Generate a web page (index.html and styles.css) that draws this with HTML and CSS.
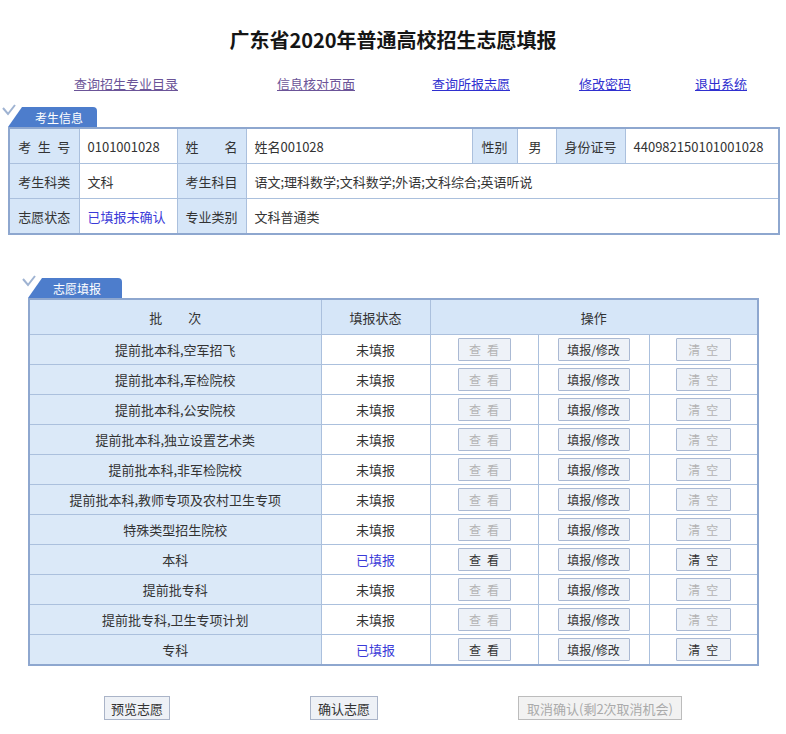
FILE: index.html
```html
<!DOCTYPE html>
<html lang="zh-CN">
<head>
<meta charset="utf-8">
<title>广东省2020年普通高校招生志愿填报</title>
<link rel="stylesheet" href="styles.css">
</head>
<body>
<h1 class="title">广东省2020年普通高校招生志愿填报</h1>
<nav class="nav">
  <a href="#" class="visited">查询招生专业目录</a>
  <a href="#" class="visited">信息核对页面</a>
  <a href="#">查询所报志愿</a>
  <a href="#">修改密码</a>
  <a href="#">退出系统</a>
</nav>

<section class="box box-info">
  <div class="tab tab-info">
    <svg class="tab-icon" width="14" height="12" viewBox="0 0 14 12"><path d="M1 4 L6 10 L13 1" fill="none" stroke="#9fb3d2" stroke-width="2"/></svg>
    <span class="tab-shape">考生信息</span>
  </div>
  <table class="tbl info">
    <colgroup>
      <col style="width:70px"><col style="width:98px"><col style="width:69px"><col style="width:226px"><col style="width:45px"><col style="width:39px"><col style="width:69px"><col style="width:154px">
    </colgroup>
    <tr>
      <td class="lbl">考&ensp;生&ensp;号</td>
      <td class="val">0101001028</td>
      <td class="lbl">姓　　名</td>
      <td class="val">姓名001028</td>
      <td class="lbl">性别</td>
      <td class="val val-sex">男</td>
      <td class="lbl">身份证号</td>
      <td class="val">440982150101001028</td>
    </tr>
    <tr>
      <td class="lbl">考生科类</td>
      <td class="val">文科</td>
      <td class="lbl">考生科目</td>
      <td class="val" colspan="5">语文;理科数学;文科数学;外语;文科综合;英语听说</td>
    </tr>
    <tr>
      <td class="lbl">志愿状态</td>
      <td class="val done">已填报未确认</td>
      <td class="lbl">专业类别</td>
      <td class="val" colspan="5">文科普通类</td>
    </tr>
  </table>
</section>

<section class="box box-vote">
  <div class="tab tab-vote">
    <svg class="tab-icon" width="14" height="12" viewBox="0 0 14 12"><path d="M1 4 L6 10 L13 1" fill="none" stroke="#9fb3d2" stroke-width="2"/></svg>
    <span class="tab-shape">志愿填报</span>
  </div>
  <table class="tbl vote">
    <colgroup>
      <col style="width:292px"><col style="width:109px"><col style="width:108px"><col style="width:111px"><col style="width:109px">
    </colgroup>
    <tr>
      <th>批　　次</th>
      <th>填报状态</th>
      <th colspan="3">操作</th>
    </tr>
    <tr><td class="batch">提前批本科,空军招飞</td><td>未填报</td><td><button class="btn btn-view" disabled>查&ensp;看</button></td><td><button class="btn btn-edit">填报/修改</button></td><td><button class="btn btn-clear" disabled>清&ensp;空</button></td></tr>
    <tr><td class="batch">提前批本科,军检院校</td><td>未填报</td><td><button class="btn btn-view" disabled>查&ensp;看</button></td><td><button class="btn btn-edit">填报/修改</button></td><td><button class="btn btn-clear" disabled>清&ensp;空</button></td></tr>
    <tr><td class="batch">提前批本科,公安院校</td><td>未填报</td><td><button class="btn btn-view" disabled>查&ensp;看</button></td><td><button class="btn btn-edit">填报/修改</button></td><td><button class="btn btn-clear" disabled>清&ensp;空</button></td></tr>
    <tr><td class="batch">提前批本科,独立设置艺术类</td><td>未填报</td><td><button class="btn btn-view" disabled>查&ensp;看</button></td><td><button class="btn btn-edit">填报/修改</button></td><td><button class="btn btn-clear" disabled>清&ensp;空</button></td></tr>
    <tr><td class="batch">提前批本科,非军检院校</td><td>未填报</td><td><button class="btn btn-view" disabled>查&ensp;看</button></td><td><button class="btn btn-edit">填报/修改</button></td><td><button class="btn btn-clear" disabled>清&ensp;空</button></td></tr>
    <tr><td class="batch">提前批本科,教师专项及农村卫生专项</td><td>未填报</td><td><button class="btn btn-view" disabled>查&ensp;看</button></td><td><button class="btn btn-edit">填报/修改</button></td><td><button class="btn btn-clear" disabled>清&ensp;空</button></td></tr>
    <tr><td class="batch">特殊类型招生院校</td><td>未填报</td><td><button class="btn btn-view" disabled>查&ensp;看</button></td><td><button class="btn btn-edit">填报/修改</button></td><td><button class="btn btn-clear" disabled>清&ensp;空</button></td></tr>
    <tr><td class="batch">本科</td><td class="done">已填报</td><td><button class="btn btn-view">查&ensp;看</button></td><td><button class="btn btn-edit">填报/修改</button></td><td><button class="btn btn-clear">清&ensp;空</button></td></tr>
    <tr><td class="batch">提前批专科</td><td>未填报</td><td><button class="btn btn-view" disabled>查&ensp;看</button></td><td><button class="btn btn-edit">填报/修改</button></td><td><button class="btn btn-clear" disabled>清&ensp;空</button></td></tr>
    <tr><td class="batch">提前批专科,卫生专项计划</td><td>未填报</td><td><button class="btn btn-view" disabled>查&ensp;看</button></td><td><button class="btn btn-edit">填报/修改</button></td><td><button class="btn btn-clear" disabled>清&ensp;空</button></td></tr>
    <tr><td class="batch">专科</td><td class="done">已填报</td><td><button class="btn btn-view">查&ensp;看</button></td><td><button class="btn btn-edit">填报/修改</button></td><td><button class="btn btn-clear">清&ensp;空</button></td></tr>
  </table>
</section>

<div class="actions">
  <button class="act-btn act-preview">预览志愿</button>
  <button class="act-btn act-confirm">确认志愿</button>
  <button class="act-btn act-cancel" disabled>取消确认(剩2次取消机会)</button>
</div>
</body>
</html>
```

FILE: styles.css
```css
html, body {
  margin: 0;
  padding: 0;
  background: #ffffff;
}

body {
  font-family: "Noto Sans CJK SC", "Noto Sans", "Liberation Sans", sans-serif;
  color: #333333;
  font-size: 13px;
}

.title {
  margin: 26px 0 0;
  text-align: center;
  font-size: 20px;
  font-weight: bold;
  line-height: 28px;
  color: #151515;
}

.nav {
  display: grid;
  grid-template-columns: 236px 144px 166px 102px 130px;
  margin: 21px 0 0 8px;
  font-size: 13px;
  line-height: 18px;
}

.nav a {
  justify-self: center;
  color: #2f2fcf;
  text-decoration: underline;
}

.nav a.visited {
  color: #6b5498;
}

.box {
  margin-left: 8px;
  width: 770px;
}

.box-info {
  margin-top: 14px;
}

.box-vote {
  margin: 43px 0 0 28px;
  width: 729px;
}

.tab {
  position: relative;
  height: 20px;
}

.tab-icon {
  position: absolute;
  left: -6px;
  top: -3px;
}

.tab-shape {
  display: flex;
  align-items: center;
  box-sizing: border-box;
  height: 20px;
  background: #4d7dcc;
  color: #ffffff;
  font-size: 12px;
  clip-path: polygon(14px 0, 100% 0, 100% 100%, 0 100%);
  border-top-right-radius: 4px;
}

.tab-info .tab-shape {
  width: 89px;
  padding-left: 27px;
}

.tab-vote .tab-shape {
  width: 94px;
  padding-left: 25px;
}

.tbl {
  border-collapse: collapse;
  table-layout: fixed;
  width: 100%;
  border: 2px solid #8ea7cf;
  font-size: 13px;
}

.tbl td,
.tbl th {
  border: 1px solid #abc0dd;
  padding: 0;
}

.info td {
  height: 34px;
  white-space: nowrap;
}

.info .lbl {
  background: #d6e6f8;
  text-align: center;
}

.info .val {
  padding-left: 8px;
}

.info .val-sex {
  padding-left: 11px;
}

.done {
  color: #3a3ad8;
}

.vote th {
  background: #d6e6f8;
  height: 34px;
  font-weight: normal;
  text-align: center;
}

.vote td {
  height: 29px;
  text-align: center;
  white-space: nowrap;
}

.vote td.batch {
  background: #dbe9f8;
}

.btn {
  height: 23px;
  padding: 0;
  font-family: "Noto Sans CJK SC", "Noto Sans", sans-serif;
  font-size: 12px;
  color: #333333;
  background: #eef2f8;
  border: 1px solid #aab9d3;
  border-radius: 1px;
  vertical-align: middle;
}

.btn:disabled {
  color: #b3b3b3;
}

.btn-view {
  width: 53px;
}

.btn-edit {
  width: 72px;
}

.btn-clear {
  width: 55px;
}

.actions {
  display: flex;
  gap: 140px;
  padding-left: 104px;
  margin-top: 30px;
}

.act-btn {
  height: 24px;
  padding: 0;
  font-family: "Noto Sans CJK SC", "Noto Sans", sans-serif;
  font-size: 13px;
  color: #333333;
  background: #eef1f6;
  border: 1px solid #aab4c8;
}

.act-btn:disabled {
  color: #aaaaaa;
  background: #f2f2f2;
  border-color: #bcbcbc;
}

.act-preview {
  width: 66px;
}

.act-confirm {
  width: 68px;
}

.act-cancel {
  width: 164px;
}
```
